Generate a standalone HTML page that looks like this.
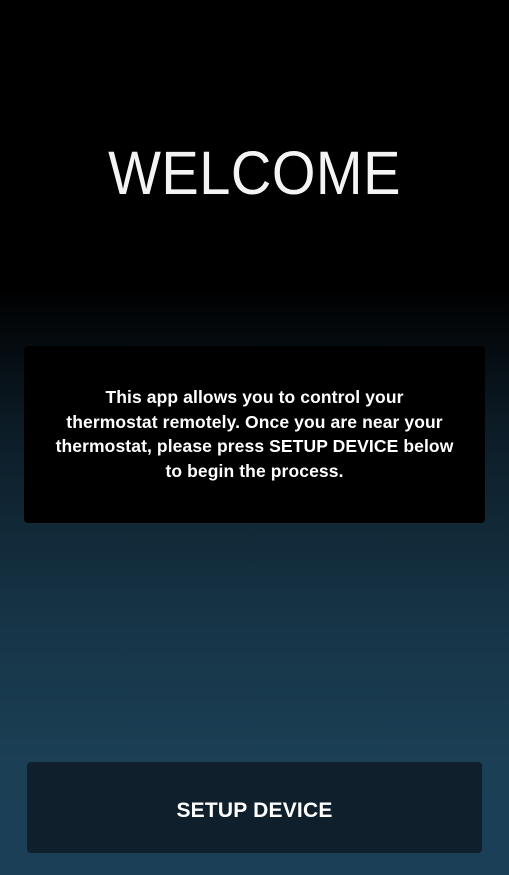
<!DOCTYPE html>
<html><head><meta charset="utf-8"><style>
html,body{margin:0;padding:0}
body{width:509px;height:875px;position:relative;overflow:hidden;font-family:"Liberation Sans",sans-serif;color:#fff;
background:linear-gradient(to bottom,#000 0px,#000 290px,#0c1c27 430px,#163446 620px,#1b3f55 760px,#1b3f56 875px);}
h1{position:absolute;top:138px;left:0;width:509px;text-align:center;margin:0;font-weight:normal;font-size:56px;line-height:70px;letter-spacing:0.5px;transform:scaleY(1.1);color:#f4f4f4}
.box{position:absolute;left:24px;top:346px;width:461px;height:177px;background:#000;border-radius:4px;}
.box p{margin:0;position:absolute;top:39px;left:0;width:461px;text-align:center;font-size:17.5px;line-height:24.5px;font-weight:bold;letter-spacing:0.1px}
.btn{position:absolute;left:27px;top:762px;width:455px;height:91px;background:#0f1f2c;border-radius:4px;text-align:center;line-height:98px;font-size:21px;font-weight:bold;letter-spacing:0.2px}
</style></head><body>
<h1>WELCOME</h1>
<div class="box"><p>This app allows you to control your<br>thermostat remotely. Once you are near your<br>thermostat, please press SETUP DEVICE below<br>to begin the process.</p></div>
<div class="btn">SETUP DEVICE</div>
</body></html>
